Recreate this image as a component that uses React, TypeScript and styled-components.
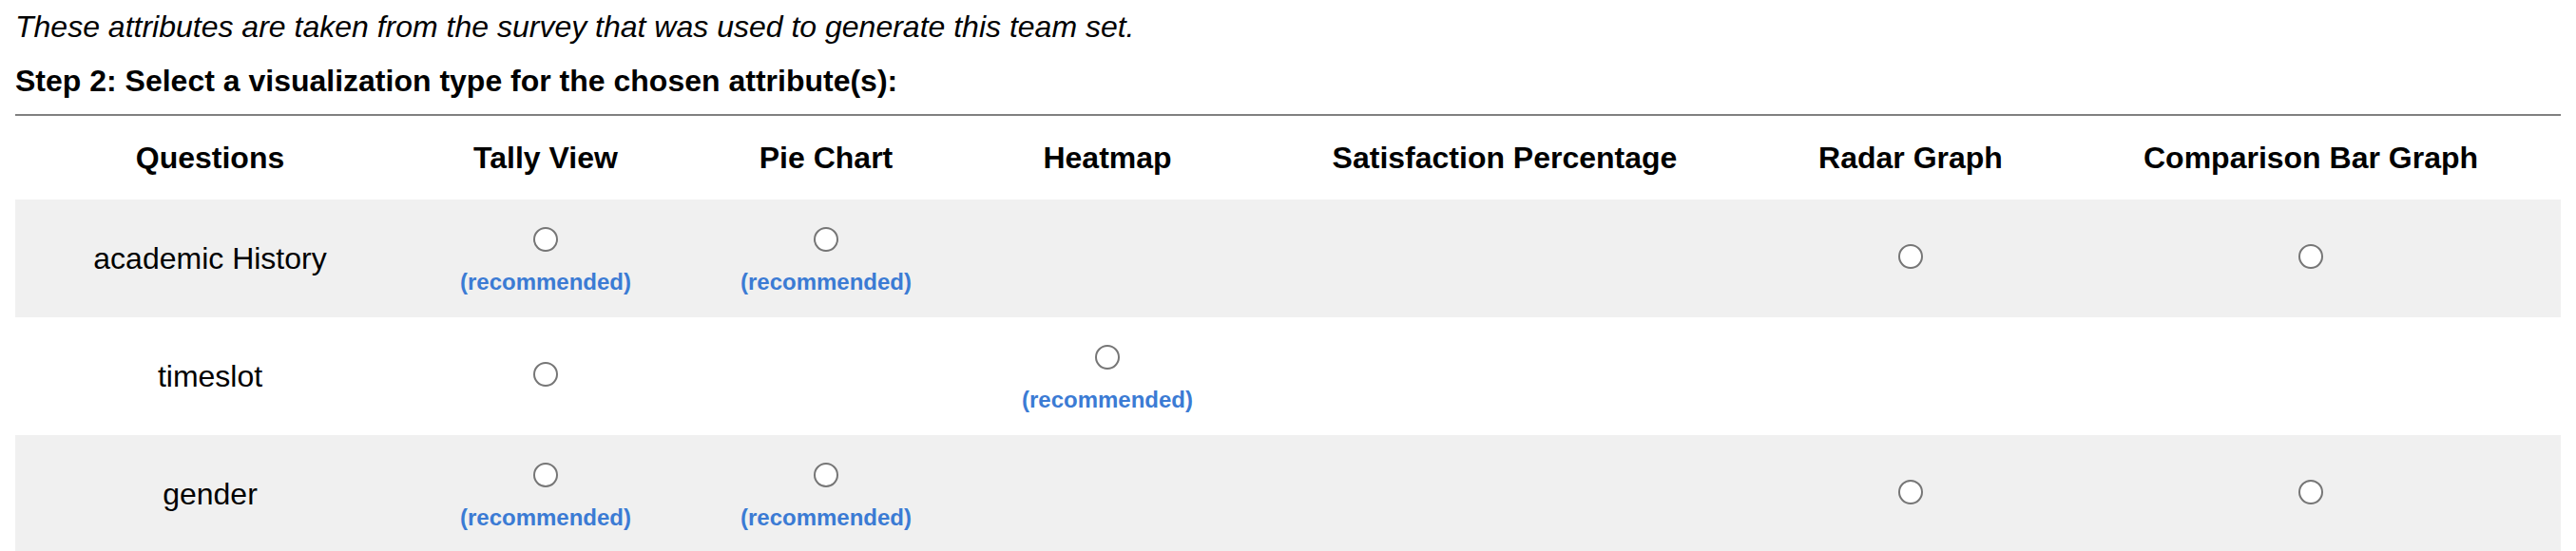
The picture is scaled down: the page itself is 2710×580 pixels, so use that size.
import React from "react";
import styled, { createGlobalStyle } from "styled-components";

const GlobalStyle = createGlobalStyle`
  html, body {
    margin: 0;
    padding: 0;
    background: #ffffff;
  }
  body {
    font-family: "Liberation Sans", Arial, Helvetica, sans-serif;
    color: #000000;
  }
`;

const COLUMNS = "410px 296px 294px 298px 538px 316px 1fr";

const Page = styled.div`
  padding: 10px 16px 0;
  width: 2678px;
`;

const Intro = styled.p`
  margin: 0;
  font-style: italic;
  font-size: 32px;
  line-height: 37px;
`;

const StepHeading = styled.h3`
  margin: 20px 0 0;
  font-size: 32px;
  line-height: 37px;
  font-weight: 700;
`;

const Divider = styled.hr`
  margin: 16px 0 0;
  border: 0;
  height: 2px;
  background: #808080;
`;

const Table = styled.div`
  display: flex;
  flex-direction: column;
`;

const HeaderRow = styled.div`
  display: grid;
  grid-template-columns: ${COLUMNS};
  height: 88px;
  align-items: center;
`;

const HeaderCell = styled.div`
  text-align: center;
  font-size: 32px;
  line-height: 37px;
  font-weight: 700;
  white-space: nowrap;
`;

const BodyRow = styled.div<{ $shaded: boolean }>`
  display: grid;
  grid-template-columns: ${COLUMNS};
  height: 124px;
  align-items: center;
  background: ${(p) => (p.$shaded ? "#f0f0f0" : "#ffffff")};
`;

const QuestionCell = styled.div`
  text-align: center;
  font-size: 32px;
  line-height: 37px;
  white-space: nowrap;
`;

const OptionCell = styled.div`
  display: flex;
  flex-direction: column;
  align-items: center;
  justify-content: center;
`;

const Radio = styled.input.attrs({ type: "radio" })<{ $labelled: boolean }>`
  appearance: none;
  -webkit-appearance: none;
  width: 26px;
  height: 26px;
  margin: ${(p) => (p.$labelled ? "6px 0 0" : "0 0 5px")};
  border: 2px solid #767676;
  border-radius: 50%;
  background: #ffffff;
  box-sizing: border-box;
  cursor: pointer;
`;

const Recommended = styled.span`
  margin-top: 18px;
  font-size: 24px;
  line-height: 28px;
  font-weight: 700;
  color: #3b7bd4;
  white-space: nowrap;
`;

type Mark = "none" | "radio" | "rec";

const headers = [
  "Questions",
  "Tally View",
  "Pie Chart",
  "Heatmap",
  "Satisfaction Percentage",
  "Radar Graph",
  "Comparison Bar Graph",
];

const rows: { question: string; marks: Mark[] }[] = [
  {
    question: "academic History",
    marks: ["rec", "rec", "none", "none", "radio", "radio"],
  },
  {
    question: "timeslot",
    marks: ["radio", "none", "rec", "none", "none", "none"],
  },
  {
    question: "gender",
    marks: ["rec", "rec", "none", "none", "radio", "radio"],
  },
];

export default function App() {
  return (
    <>
      <GlobalStyle />
      <Page>
        <Intro>
          These attributes are taken from the survey that was used to generate
          this team set.
        </Intro>
        <StepHeading>
          Step 2: Select a visualization type for the chosen attribute(s):
        </StepHeading>
        <Divider />
        <Table>
          <HeaderRow>
            {headers.map((h) => (
              <HeaderCell key={h}>{h}</HeaderCell>
            ))}
          </HeaderRow>
          {rows.map((row, ri) => (
            <BodyRow key={row.question} $shaded={ri % 2 === 0}>
              <QuestionCell>{row.question}</QuestionCell>
              {row.marks.map((m, ci) => (
                <OptionCell key={ci}>
                  {m !== "none" && (
                    <Radio
                      name={`viz-${row.question}`}
                      $labelled={m === "rec"}
                      aria-label={headers[ci + 1]}
                    />
                  )}
                  {m === "rec" && <Recommended>(recommended)</Recommended>}
                </OptionCell>
              ))}
            </BodyRow>
          ))}
        </Table>
      </Page>
    </>
  );
}
